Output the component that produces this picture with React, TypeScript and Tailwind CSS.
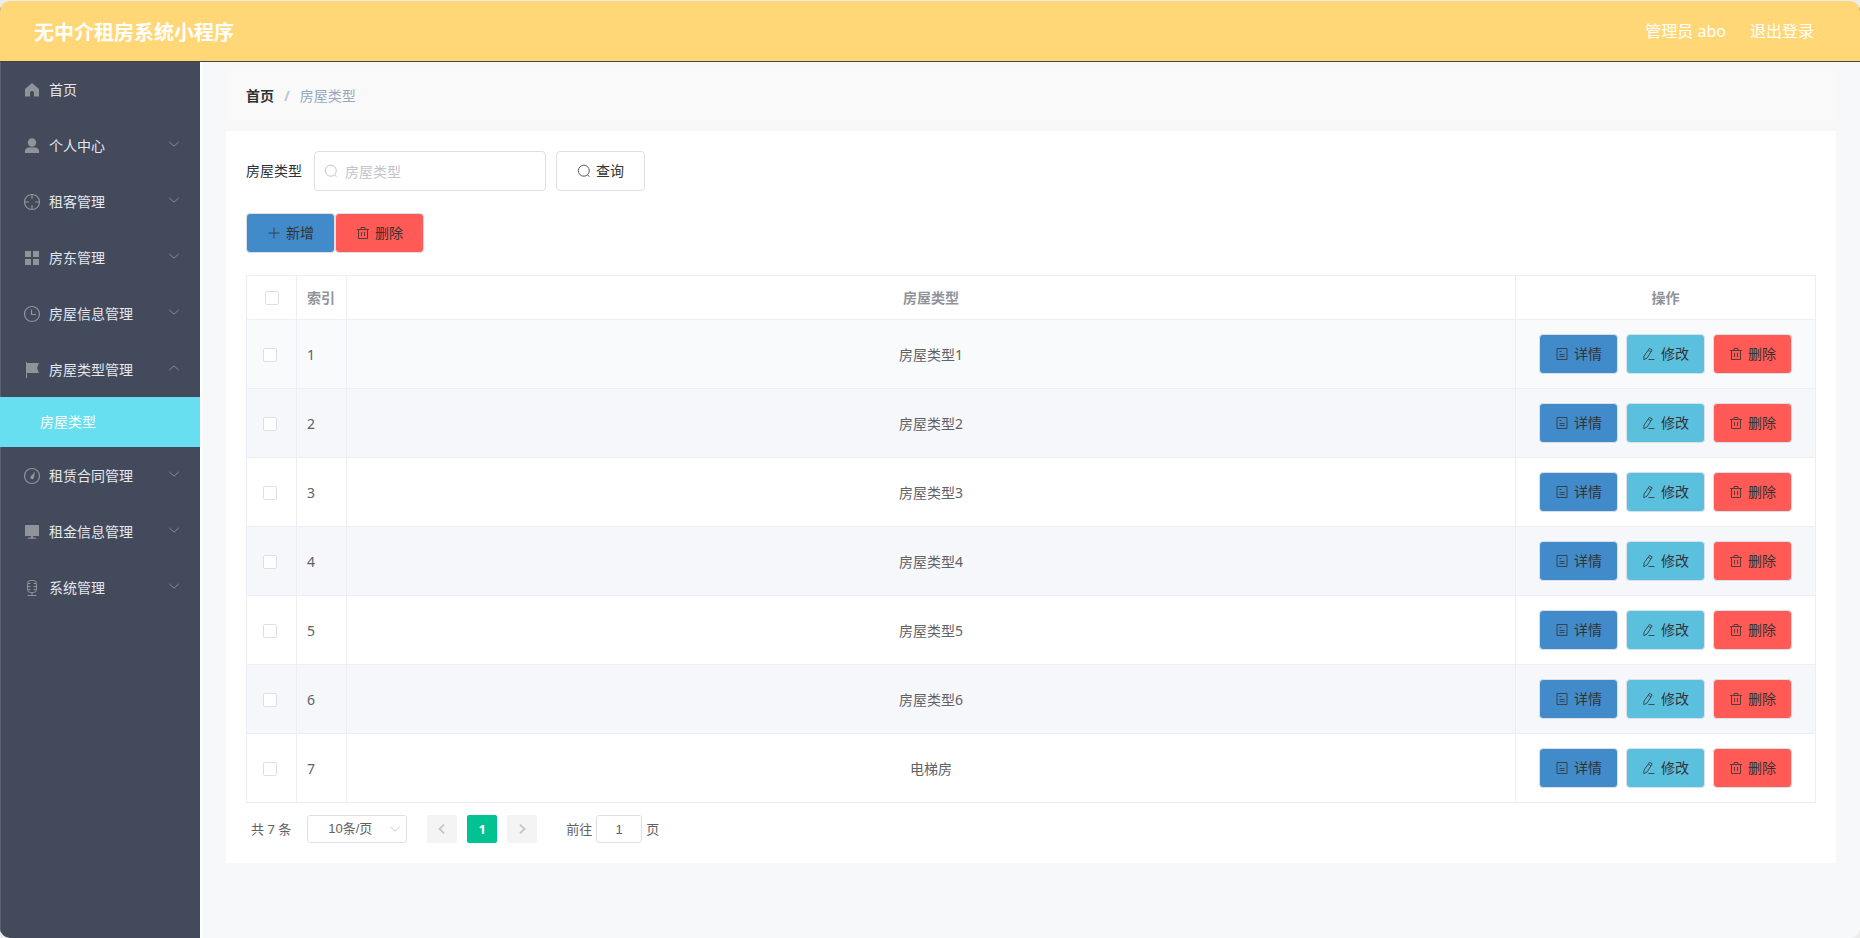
import { useState } from 'react'
import type { ReactNode } from 'react'

type MenuItem = {
  label: string
  icon: ReactNode
  children?: string[]
}

const menu: MenuItem[] = [
  {
    label: '首页',
    icon: <path fill="currentColor" d="M9 2l7 6v7.500h-5V12a2 2 0 0 0-4 0v3.500H2V8z" />,
  },
  {
    label: '个人中心',
    icon: (
      <g fill="currentColor">
        <circle cx="9" cy="5.5" r="4.2" />
        <path d="M2 16v-2a4 4 0 0 1 4-3.500h6a4 4 0 0 1 4 3.500v2z" />
      </g>
    ),
    children: [],
  },
  {
    label: '租客管理',
    icon: (
      <g fill="none" stroke="currentColor" strokeWidth="1.2">
        <circle cx="9" cy="9" r="7.5" />
        <path d="M9 1.5V6M9 12v4.5M1.5 9H6M12 9h4.5" />
      </g>
    ),
    children: [],
  },
  {
    label: '房东管理',
    icon: <path fill="currentColor" d="M2 2h6v6H2zM10 2h6v6h-6zM2 10h6v6H2zM10 10h6v6h-6z" />,
    children: [],
  },
  {
    label: '房屋信息管理',
    icon: (
      <g fill="none" stroke="currentColor" strokeWidth="1.2">
        <circle cx="9" cy="9" r="7.5" />
        <path d="M8.5 4.5v5H13" />
      </g>
    ),
    children: [],
  },
  {
    label: '房屋类型管理',
    icon: <path fill="currentColor" d="M3 1h1v1h12l-2 5 2 5H4v5H3z" />,
    children: ['房屋类型'],
  },
  {
    label: '租赁合同管理',
    icon: (
      <>
        <circle cx="9" cy="9" r="7.5" fill="none" stroke="currentColor" strokeWidth="1.2" />
        <path fill="currentColor" d="M12 4.5L10.8 11a1.700 1.700 0 0 1-3.300-1.300z" />
      </>
    ),
    children: [],
  },
  {
    label: '租金信息管理',
    icon: <path fill="currentColor" d="M2 2h14v11H2zM8 13h2v1.5c2 0 3 .3 4 1.3H4c1-1 2-1.300 4-1.300z" />,
    children: [],
  },
  {
    label: '系统管理',
    icon: (
      <g fill="none" stroke="currentColor">
        <rect x="4.5" y="1.5" width="9" height="12" rx="3" />
        <path d="M5 4.5h2.500M5 7.500h2.500M5 10.500h2.500M13 4.500h-2.500M13 7.500h-2.500M13 10.500h-2.500M9 13.500v3M4.500 16.500h9" />
      </g>
    ),
    children: [],
  },
]

const rows = ['房屋类型1', '房屋类型2', '房屋类型3', '房屋类型4', '房屋类型5', '房屋类型6', '电梯房']

const iconPaths = {
  search: 'M12.3 6.700a5.500 5.500 0 1 1-11 0a5.500 5.500 0 0 1 11 0M10.500 10.800l2 2',
  plus: 'M7 1.500v11M1.500 7h11',
  trash: 'M1 3.500h12M5 3.500V1.500h4v2M2.500 3.500v9h9v-9M5.500 6v4M8.500 6v4',
  detail: 'M2 1.500h10v11H2zM4.500 4.500h2M4.500 7.500h5M4.500 9.500h5',
  edit: 'M7.500 1.300l2.700 1.600-5.200 8.200-3.200 1.600.2-3.600zM6.300 3.300l2.700 1.600M6.500 12.500h6',
  down: 'M1.500 4.500L7 9.500l5.500-5',
  up: 'M1.500 9.500L7 4.500l5.500 5',
  left: 'M9.500 2L4 7l5.500 5',
  right: 'M4.500 2L10 7l-5.500 5',
}

function Icon({ name, className = 'size-[14px]' }: { name: keyof typeof iconPaths; className?: string }) {
  return (
    <svg className={className} viewBox="0 0 14 14" fill="none" stroke="currentColor" aria-hidden="true">
      <path d={iconPaths[name]} />
    </svg>
  )
}

function Button({ icon, className, children }: { icon: keyof typeof iconPaths; className: string; children: string }) {
  return (
    <button
      type="button"
      className={`inline-flex h-10 cursor-pointer items-center gap-[5px] rounded border border-[#dcdfe6] whitespace-nowrap text-[#333333] ${className}`}
    >
      <Icon name={icon} className="size-[14px] opacity-80" />
      {children}
    </button>
  )
}

function Checkbox(props: { label: string; checked: boolean; onChange: () => void }) {
  return (
    <input
      type="checkbox"
      aria-label={props.label}
      checked={props.checked}
      onChange={props.onChange}
      className="block size-[14px] appearance-none rounded-[2px] border border-[#dcdfe6] bg-white checked:border-[#00c292] checked:bg-[#00c292]"
    />
  )
}

function Sidebar() {
  const [open, setOpen] = useState('房屋类型管理')

  return (
    <nav className="w-[200px] shrink-0 border-l border-[#5a6170] bg-[#434a5c]">
      {menu.map((item) => (
        <div key={item.label}>
          <button
            type="button"
            onClick={() => setOpen(open === item.label ? '' : item.label)}
            className="flex h-14 w-full cursor-pointer items-center pt-[2px] pr-5 pl-[22px] text-[#e4e7ed]"
          >
            <svg className="mr-2 size-[18px] text-[#909399]" viewBox="0 0 18 18" aria-hidden="true">
              {item.icon}
            </svg>
            <span className="flex-1 text-left">{item.label}</span>
            {item.children && (
              <Icon name={open === item.label ? 'up' : 'down'} className="mb-1 size-3 text-[#909399]" />
            )}
          </button>
          {open === item.label &&
            item.children?.map((child) => (
              <a key={child} href="#" className="-ml-px flex h-[50px] items-center bg-[#67dff0] pl-10 text-white">
                {child}
              </a>
            ))}
        </div>
      ))}
    </nav>
  )
}

function HouseTypeTable() {
  const [selected, setSelected] = useState<number[]>([])
  const allSelected = selected.length === rows.length

  const toggle = (i: number) =>
    setSelected(selected.includes(i) ? selected.filter((s) => s !== i) : [...selected, i])

  const cell = 'border-r border-b border-[#ebeef5]'

  return (
    <table className="w-full table-fixed border-separate border-spacing-0 border-t border-l border-[#ebeef5] text-[#606266]">
      <colgroup>
        <col className="w-[50px]" />
        <col className="w-[50px]" />
        <col />
        <col className="w-[300px]" />
      </colgroup>
      <thead>
        <tr className="h-11 text-[#909399]">
          <th className={`${cell} pl-[18px]`}>
            <Checkbox
              label="全选"
              checked={allSelected}
              onChange={() => setSelected(allSelected ? [] : rows.map((_, i) => i))}
            />
          </th>
          <th className={`${cell} pl-[10px] text-left`}>索引</th>
          <th className={cell}>房屋类型</th>
          <th className={cell}>操作</th>
        </tr>
      </thead>
      <tbody>
        {rows.map((name, i) => (
          <tr key={name} className="h-[69px] first:bg-[#f9fafc] even:bg-[#f5f7fb]">
            <td className={`${cell} pt-[2px] pl-4`}>
              <Checkbox label={name} checked={selected.includes(i)} onChange={() => toggle(i)} />
            </td>
            <td className={`${cell} pt-[2px] pl-[10px]`}>{i + 1}</td>
            <td className={`${cell} pt-[2px] text-center`}>{name}</td>
            <td className={cell}>
              <div className="flex justify-center gap-2">
                <Button icon="detail" className="bg-[#428bca] px-[15px]">详情</Button>
                <Button icon="edit" className="bg-[#5bc0de] px-[15px]">修改</Button>
                <Button icon="trash" className="bg-[#ff5a56] px-[15px]">删除</Button>
              </div>
            </td>
          </tr>
        ))}
      </tbody>
    </table>
  )
}

function Pagination() {
  const [page, setPage] = useState('1')

  return (
    <div className="mt-3 flex h-7 items-center pl-[5px] text-[13px] text-[#606266]">
      <span className="mr-4">共 {rows.length} 条</span>
      <div className="relative mr-5">
        <select
          aria-label="每页条数"
          className="block h-7 w-[100px] appearance-none rounded-[3px] border border-[#dcdfe6] bg-white pl-5 font-['Liberation_Sans','Noto_Sans_CJK_SC',sans-serif]"
        >
          <option>10条/页</option>
          <option>20条/页</option>
          <option>50条/页</option>
        </select>
        <Icon name="down" className="pointer-events-none absolute top-2 right-[6px] size-3 text-[#c0c4cc]" />
      </div>
      <div className="flex gap-[10px]">
        <button type="button" disabled aria-label="上一页" className="flex h-7 w-[30px] items-center justify-center rounded-[2px] bg-[#f4f4f5] text-[#c0c4cc]">
          <Icon name="left" className="size-3 stroke-2" />
        </button>
        <button type="button" className="h-7 w-[30px] rounded-[2px] bg-[#00c292] font-bold text-white">
          1
        </button>
        <button type="button" disabled aria-label="下一页" className="flex h-7 w-[30px] items-center justify-center rounded-[2px] bg-[#f4f4f5] text-[#c0c4cc]">
          <Icon name="right" className="size-3 stroke-2" />
        </button>
      </div>
      <label className="ml-[29px] flex items-center gap-1">
        前往
        <input
          value={page}
          onChange={(e) => setPage(e.target.value)}
          className="h-7 w-[46px] rounded-[3px] border border-[#dcdfe6] bg-white text-center font-['Liberation_Sans',sans-serif]"
        />
        页
      </label>
    </div>
  )
}

export default function App() {
  return (
    <div className="min-h-screen bg-[#ececec] pt-px font-['Noto_Sans','Noto_Sans_CJK_SC',sans-serif] text-[14px] leading-5">
      <div className="flex min-h-[calc(100vh-1px)] flex-col overflow-hidden rounded-[10px] bg-[#f7f8fa]">
        <header className="z-10 flex h-[60px] items-center justify-between bg-[#ffd777] pr-[46px] pl-[34px] text-white shadow-[0_1px_0_#444444]">
          <h1 className="pt-1 text-[20px] leading-7 font-bold">无中介租房系统小程序</h1>
          <div className="flex gap-6 text-[16px] leading-6">
            <span>管理员 abo</span>
            <a href="#">退出登录</a>
          </div>
        </header>

        <div className="flex flex-1">
          <Sidebar />
          <main className="min-w-0 flex-1 border-l-2 border-white pt-[9px] pr-6 pb-6 pl-6">
            <nav className="flex h-[51px] items-center gap-[10px] rounded bg-[#f9f9f9] px-5" aria-label="面包屑">
              <a href="#" className="font-bold text-[#303133]">首页</a>
              <span className="font-bold text-[#c0c4cc]">/</span>
              <span className="text-[#97a8be]">房屋类型</span>
            </nav>

            <section className="mt-[10px] bg-white p-5">
              <form className="flex items-center" onSubmit={(e) => e.preventDefault()}>
                <label htmlFor="houseType" className="mr-3 text-[#303133]">房屋类型</label>
                <div className="relative mr-[10px]">
                  <Icon name="search" className="absolute top-[13px] left-[10px] size-[14px] text-[#c0c4cc]" />
                  <input
                    id="houseType"
                    placeholder="房屋类型"
                    className="block h-10 w-[232px] rounded border border-[#dcdfe6] bg-white pr-4 pl-[30px] placeholder:text-[#c0c4cc]"
                  />
                </div>
                <Button icon="search" className="bg-white px-5">查询</Button>
              </form>

              <div className="mt-[22px] mb-[22px] flex">
                <Button icon="plus" className="bg-[#428bca] px-5">新增</Button>
                <Button icon="trash" className="bg-[#ff5a56] px-5">删除</Button>
              </div>

              <HouseTypeTable />
              <Pagination />
            </section>
          </main>
        </div>
      </div>
    </div>
  )
}
